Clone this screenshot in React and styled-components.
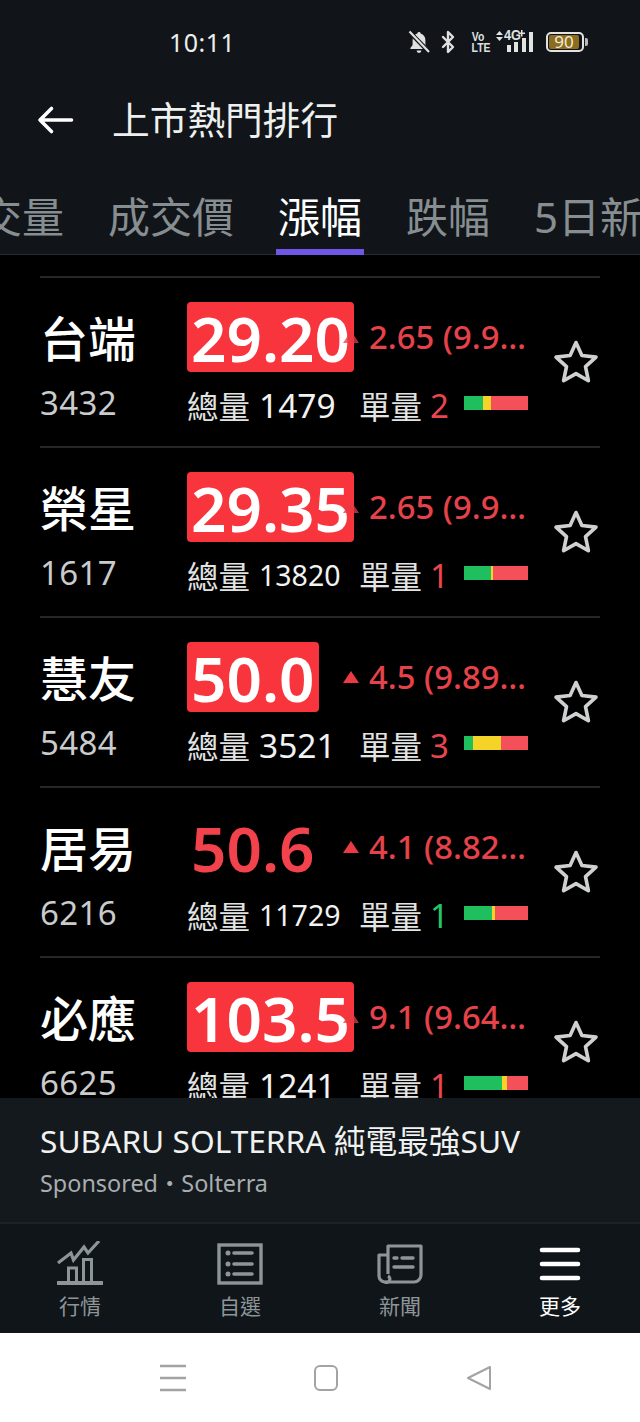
import React from 'react'
import styled, { createGlobalStyle } from 'styled-components'
import { Bluetooth } from 'lucide-react'

const Global = createGlobalStyle`
  html, body { margin: 0; padding: 0; background: #000; }
  * { box-sizing: border-box; }
`

const FONT = `"Noto Sans", "Noto Sans CJK TC", sans-serif`

const Screen = styled.div`
  width: 640px;
  height: 1422px;
  display: flex;
  flex-direction: column;
  overflow: hidden;
  background: #000;
  color: #fff;
  font-family: ${FONT};
`

const StatusBar = styled.div`
  height: 84px;
  flex: none;
  display: flex;
  align-items: center;
  padding: 0 56px 0 169px;
  background: #111519;
`

const Clock = styled.div`
  font-size: 25px;
  letter-spacing: 0.5px;
  color: #eceded;
  flex: 1;
`

const StatusIcons = styled.div`
  display: flex;
  align-items: center;
  color: #dfe0e0;
`

const Vo = styled.div`
  width: 16px;
  margin: 0 10px 0 10px;
  font-family: "Liberation Sans", sans-serif;
  font-size: 13px;
  font-weight: 700;
  line-height: 11px;
  text-align: center;
  white-space: nowrap;
  span { display: block; transform: scaleX(0.8); }
`

const Network = styled.div`
  width: 40px;
  height: 24px;
  margin-right: 10px;
  position: relative;
`

const NetLabel = styled.div`
  position: absolute;
  left: 8px;
  top: -4px;
  font-family: "Liberation Sans", sans-serif;
  font-size: 15px;
  font-weight: 700;
  transform: scaleX(0.85);
  transform-origin: left;
`

const Battery = styled.div`
  width: 38px;
  height: 20px;
  border: 2px solid #e3e3e3;
  border-radius: 5px;
  padding: 1px;
  display: flex;
  position: relative;
  &::after {
    content: "";
    position: absolute;
    right: -6px;
    top: 4px;
    width: 3px;
    height: 8px;
    border-radius: 0 2px 2px 0;
    background: #b9b9b9;
  }
`

const BatteryFill = styled.div`
  width: 30px;
  background: #8c6d1f;
  border-radius: 2px;
  font-size: 17px;
  line-height: 14px;
  text-align: center;
  color: #f2ead2;
`

const Header = styled.div`
  height: 72px;
  flex: none;
  display: flex;
  align-items: center;
  gap: 38px;
  padding-left: 37px;
  background: #111519;
`

const Title = styled.div`
  font-size: 37.7px;
  line-height: 72px;
  color: #eef0f0;
`

const Tabs = styled.div`
  height: 99px;
  flex: none;
  overflow: hidden;
  background: #111519;
  box-shadow: inset 0 -1px 0 #2a2d30;
`

const TabStrip = styled.div`
  display: flex;
  gap: 40px;
  margin-left: -64px;
  white-space: nowrap;
`

const Tab = styled.div`
  height: 99px;
  padding: 31px 2px 0;
  font-size: 42px;
  line-height: 60px;
  color: ${({ $active }) => ($active ? '#ffffff' : '#878e92')};
  border-bottom: 6px solid ${({ $active }) => ($active ? '#6f56e8' : 'transparent')};
`

const List = styled.div`
  flex: 1;
  min-height: 0;
  overflow: hidden;
  padding: 21px 40px 0;
  background: #000;
`

const Row = styled.div`
  height: 170px;
  border-top: 2px solid #24272a;
  display: flex;
  position: relative;
`

const Info = styled.div`
  width: 147px;
  flex: none;
`

const Name = styled.div`
  margin-top: 31px;
  font-size: 48px;
  line-height: 60px;
  font-weight: 500;
  color: #fff;
`

const Code = styled.div`
  margin-top: 12px;
  font-size: 33px;
  line-height: 44px;
  letter-spacing: 0.4px;
  color: #c9cbcc;
`

const Middle = styled.div`
  width: 341px;
  flex: none;
  padding-top: 24px;
`

const Quote = styled.div`
  height: 70px;
  display: flex;
  align-items: center;
`

const PriceSlot = styled.div`
  width: 156px;
  flex: none;
`

const Price = styled.div`
  display: inline-block;
  height: 70px;
  padding: 0 4px;
  border-radius: 4px;
  font-size: 62px;
  line-height: 72px;
  font-weight: 600;
  white-space: nowrap;
  color: ${({ $flash }) => ($flash ? '#ffffff' : '#f2434c')};
  background: ${({ $flash }) => ($flash ? '#f8343c' : 'transparent')};
`

const Arrow = styled.div`
  width: 0;
  height: 0;
  flex: none;
  margin-right: 10px;
  border-left: 8px solid transparent;
  border-right: 8px solid transparent;
  border-bottom: 12px solid #ea3a43;
  opacity: ${({ $dim }) => ($dim ? 0.75 : 1)};
`

const Change = styled.div`
  width: 159px;
  font-size: 32.8px;
  line-height: 44px;
  font-weight: 500;
  color: #e5424a;
  white-space: nowrap;
  overflow: hidden;
  text-overflow: ellipsis;
`

const Volume = styled.div`
  height: 44px;
  margin-top: 11px;
  display: flex;
  align-items: center;
  white-space: nowrap;
`

const VolLabel = styled.span`
  font-size: 31.5px;
  color: #e2e3e3;
`

const Total = styled.span`
  width: 109px;
  flex: none;
  padding-left: 9px;
  font-size: ${({ $small }) => ($small ? '28.5px' : '33.5px')};
  color: #f2f2f2;
`

const Single = styled.span`
  width: 42px;
  flex: none;
  padding-left: 8px;
  font-size: 33px;
  color: ${({ $up }) => ($up ? '#ea4650' : '#23c46a')};
`

const Bar = styled.div`
  width: 64px;
  height: 14px;
  margin-bottom: 4px;
  flex: none;
  display: flex;
`

const Seg = styled.div`
  background: ${({ $c }) => $c};
  width: ${({ $w }) => $w}px;
`

const StarCell = styled.div`
  flex: 1;
  display: flex;
  align-items: center;
  justify-content: flex-end;
  padding-right: 1px;
`

const Ad = styled.div`
  height: 124px;
  flex: none;
  padding: 20px 40px 0;
  background: #13191c;
`

const AdTitle = styled.div`
  font-size: 31.7px;
  line-height: 46px;
  color: #f0f1f1;
  white-space: nowrap;
`

const AdSub = styled.div`
  margin-top: 2px;
  font-size: 23.4px;
  line-height: 34px;
  color: #a9adaf;
`

const TabBar = styled.div`
  height: 111px;
  flex: none;
  display: grid;
  grid-template-columns: 160px 160px 160px 160px;
  border-top: 2px solid #1d2226;
  background: #101519;
`

const NavItem = styled.div`
  height: 100%;
  padding-top: 16px;
  display: flex;
  flex-direction: column;
  align-items: center;
  color: ${({ $active }) => ($active ? '#ffffff' : '#8e9599')};
`

const NavIcon = styled.div`
  height: 48px;
  display: flex;
  align-items: center;
`

const NavLabel = styled.div`
  margin-top: 3px;
  font-size: 21px;
  line-height: 30px;
`

const SystemBar = styled.div`
  height: 89px;
  flex: none;
  background: #fff;
  display: flex;
  align-items: center;
  padding-top: 1px;
`

const SystemItem = styled.div`
  width: 160px;
  flex: none;
  display: flex;
  justify-content: center;
  margin-left: ${({ $first }) => ($first ? '93px' : '0')};
  margin-right: -7px;
`

const StarIcon = () => (
  <svg width="46" height="46" viewBox="0 0 46 46" fill="none" stroke="#cfd0d1" strokeWidth="3.6" strokeLinejoin="round">
    <path d="M23 3.5l5.9 13 14.1 1.6-10.5 9.6 2.9 14-12.4-7.1-12.4 7.1 2.9-14L3 18.1l14.1-1.6z" />
  </svg>
)

const BackArrow = () => (
  <svg width="37" height="30" viewBox="0 0 37 30" fill="none" stroke="#fff" strokeWidth="3.6" strokeLinecap="round" strokeLinejoin="round">
    <path d="M34.5 15H3M14.5 3.5L3 15l11.5 11.5" />
  </svg>
)

const MutedBell = () => (
  <svg width="22" height="24" viewBox="0 0 22 24" fill="#dfe0e0">
    <path d="M11 2c-1 0-1.6.7-1.7 1.6C6.4 4.4 4.6 7 4.6 10v5L2.4 18v1h17.2v-1l-2.2-3v-5c0-3-1.8-5.600-4.700-6.400C12.600 2.700 12 2 11 2zM8.600 20.500a2.400 2.400 0 0 0 4.800 0z" />
    <path d="M2 2.500L20.500 21.500" stroke="#111519" strokeWidth="4.500" />
    <path d="M1.500 1.500L21 22" stroke="#dfe0e0" strokeWidth="2.200" />
  </svg>
)

const SignalArt = () => (
  <svg width="40" height="24" viewBox="0 0 40 24" fill="#e2e3e3" style={{ position: 'absolute', left: 0, top: 0 }}>
    <path d="M3.500 1l3.500 4H0zM3.500 11L0 7h7z" />
    <path d="M25 0h1.500v2.500H29V4h-2.500v2.500H25V4h-2.500V2.500H25z" />
    <rect x="11" y="15" width="4" height="7" />
    <rect x="18" y="12" width="4" height="10" />
    <rect x="26" y="8" width="4" height="14" />
    <rect x="33" y="2" width="4" height="20" />
  </svg>
)

const ChartIcon = () => (
  <svg width="46" height="46" viewBox="0 0 46 46" fill="none" stroke="currentColor" strokeWidth="3">
    <path d="M1 22L14 12l2.500 7L27 6l4 6L42 0" strokeWidth="3.200" />
    <path d="M11.500 41V27h8v14M26.500 41V18.500h8V41" />
    <path d="M1 42h44" strokeWidth="4" strokeLinecap="round" />
  </svg>
)

const ListIcon = () => (
  <svg width="46" height="42" viewBox="0 0 46 42" fill="none" stroke="currentColor">
    <rect x="2" y="2" width="42" height="38" strokeWidth="3.400" />
    <path d="M17 10h18M17 21h18M17 31h18" strokeWidth="3.600" strokeLinecap="round" />
    <circle cx="11" cy="10" r="2.500" fill="currentColor" stroke="none" />
    <circle cx="11" cy="21" r="2.500" fill="currentColor" stroke="none" />
    <circle cx="11" cy="31" r="2.500" fill="currentColor" stroke="none" />
  </svg>
)

const NewsIcon = () => (
  <svg width="46" height="40" viewBox="0 0 46 40" fill="none" stroke="currentColor" strokeWidth="3.200" strokeLinejoin="round">
    <path d="M11 30V2h33v29a7 7 0 0 1-7 7H8a6 6 0 0 1-6-6V11h9" />
    <path d="M8 38a3 3 0 0 0 3-6" />
    <path d="M17 14h3M25 14h11M17 23h19" strokeWidth="3.400" strokeLinecap="round" />
  </svg>
)

const MenuIcon = () => (
  <svg width="42" height="36" viewBox="0 0 42 36" fill="none" stroke="currentColor" strokeWidth="4.600" strokeLinecap="round">
    <path d="M3 4h36M3 18h36M3 32h36" />
  </svg>
)

const SysMenu = () => (
  <svg width="26" height="28" viewBox="0 0 26 28" fill="none" stroke="#a3a3a3" strokeWidth="2.400">
    <path d="M0 2h26M0 14h26M0 26h26" />
  </svg>
)

const SysHome = () => (
  <svg width="26" height="28" viewBox="0 0 26 28" fill="none" stroke="#a3a3a3" strokeWidth="2">
    <rect x="2" y="2" width="22" height="24" rx="5" />
  </svg>
)

const SysBack = () => (
  <svg width="26" height="28" viewBox="0 0 26 28" fill="none" stroke="#a3a3a3" strokeWidth="2" strokeLinejoin="round">
    <path d="M24 3v22L2 14z" />
  </svg>
)

const stocks = [
  { name: '台端', code: '3432', price: '29.20', flash: true, change: '2.65 (9.98%)', total: '1479', single: '2', up: true, bar: [19, 8, 37] },
  { name: '榮星', code: '1617', price: '29.35', flash: true, change: '2.65 (9.93%)', total: '13820', single: '1', up: true, bar: [27, 2, 35] },
  { name: '慧友', code: '5484', price: '50.0', flash: true, change: '4.5 (9.89%)', total: '3521', single: '3', up: true, bar: [9, 28, 27] },
  { name: '居易', code: '6216', price: '50.6', flash: false, change: '4.1 (8.82%)', total: '11729', single: '1', up: false, bar: [28, 3, 33] },
  { name: '必應', code: '6625', price: '103.5', flash: true, change: '9.1 (9.64%)', total: '1241', single: '1', up: true, bar: [38, 5, 21] },
]

const barColors = ['#1fbf5f', '#f5d327', '#f4505a']

const StockRow = ({ stock }) => (
  <Row>
    <Info>
      <Name>{stock.name}</Name>
      <Code>{stock.code}</Code>
    </Info>
    <Middle>
      <Quote>
        <PriceSlot>
          <Price $flash={stock.flash}>{stock.price}</Price>
        </PriceSlot>
        <Arrow $dim={stock.price.length === 5} />
        <Change>{stock.change}</Change>
      </Quote>
      <Volume>
        <VolLabel>總量</VolLabel>
        <Total $small={stock.total.length > 4}>{stock.total}</Total>
        <VolLabel>單量</VolLabel>
        <Single $up={stock.up}>{stock.single}</Single>
        <Bar>
          {stock.bar.map((w, i) => (
            <Seg key={i} $w={w} $c={barColors[i]} />
          ))}
        </Bar>
      </Volume>
    </Middle>
    <StarCell>
      <StarIcon />
    </StarCell>
  </Row>
)

const App = () => (
  <Screen lang="zh-TW">
    <Global />
    <StatusBar>
      <Clock>10:11</Clock>
      <StatusIcons>
        <MutedBell />
        <Bluetooth size={24} strokeWidth={2.4} style={{ marginLeft: 6 }} />
        <Vo>
          <span>Vo</span>
          <span>LTE</span>
        </Vo>
        <Network>
          <SignalArt />
          <NetLabel>4G</NetLabel>
        </Network>
        <Battery>
          <BatteryFill>90</BatteryFill>
        </Battery>
      </StatusIcons>
    </StatusBar>
    <Header>
      <BackArrow />
      <Title>上市熱門排行</Title>
    </Header>
    <Tabs>
      <TabStrip>
        <Tab>成交量</Tab>
        <Tab>成交價</Tab>
        <Tab $active>漲幅</Tab>
        <Tab>跌幅</Tab>
        <Tab>5日新高</Tab>
      </TabStrip>
    </Tabs>
    <List>
      {stocks.map((s) => (
        <StockRow key={s.code} stock={s} />
      ))}
    </List>
    <Ad>
      <AdTitle>SUBARU SOLTERRA 純電最強SUV</AdTitle>
      <AdSub>Sponsored・Solterra</AdSub>
    </Ad>
    <TabBar>
      <NavItem>
        <NavIcon><ChartIcon /></NavIcon>
        <NavLabel>行情</NavLabel>
      </NavItem>
      <NavItem>
        <NavIcon><ListIcon /></NavIcon>
        <NavLabel>自選</NavLabel>
      </NavItem>
      <NavItem>
        <NavIcon><NewsIcon /></NavIcon>
        <NavLabel>新聞</NavLabel>
      </NavItem>
      <NavItem $active>
        <NavIcon><MenuIcon /></NavIcon>
        <NavLabel>更多</NavLabel>
      </NavItem>
    </TabBar>
    <SystemBar>
      <SystemItem $first><SysMenu /></SystemItem>
      <SystemItem><SysHome /></SystemItem>
      <SystemItem><SysBack /></SystemItem>
    </SystemBar>
  </Screen>
)

export default App
